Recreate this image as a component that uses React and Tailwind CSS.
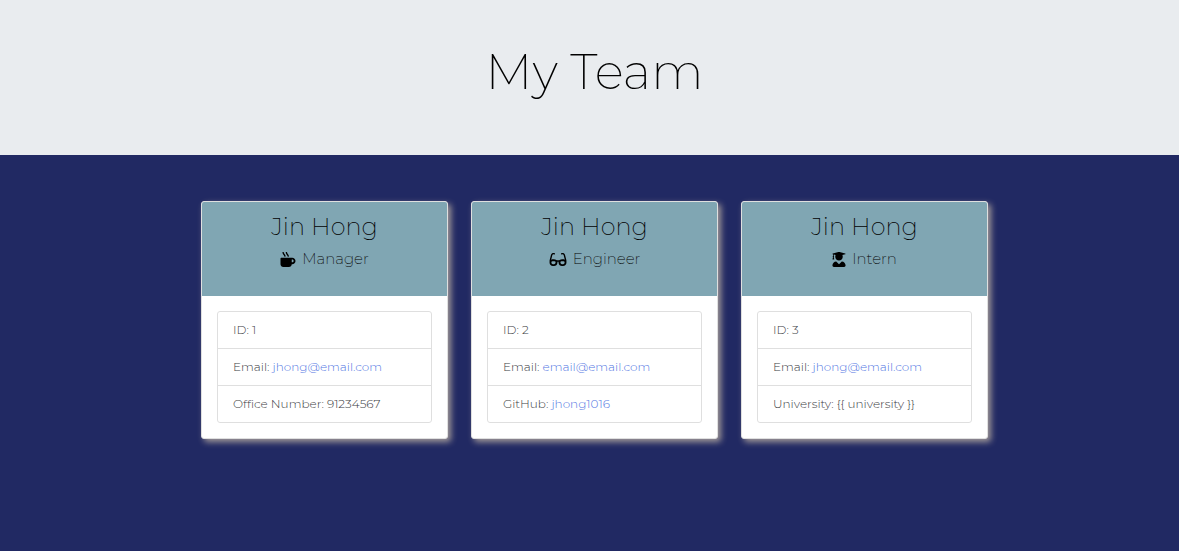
import { FaMugHot, FaGlasses, FaUserGraduate } from "react-icons/fa";

const team = [
  {
    name: "Jin Hong",
    role: "Manager",
    Icon: FaMugHot,
    iconWidth: "w-4",
    rows: [
      { label: "ID: ", value: "1" },
      { label: "Email: ", value: "jhong@email.com", href: "mailto:jhong@email.com" },
      { label: "Office Number: ", value: "91234567" },
    ],
  },
  {
    name: "Jin Hong",
    role: "Engineer",
    Icon: FaGlasses,
    iconWidth: "w-[18px]",
    rows: [
      { label: "ID: ", value: "2" },
      { label: "Email: ", value: "email@email.com", href: "mailto:email@email.com" },
      { label: "GitHub: ", value: "jhong1016", href: "https://github.com/jhong1016" },
    ],
  },
  {
    name: "Jin Hong",
    role: "Intern",
    Icon: FaUserGraduate,
    iconWidth: "w-[14px]",
    rows: [
      { label: "ID: ", value: "3" },
      { label: "Email: ", value: "jhong@email.com", href: "mailto:jhong@email.com" },
      { label: "University: ", value: "{{ university }}" },
    ],
  },
];

function Card({ name, role, Icon, iconWidth, rows }) {
  return (
    <article className="w-[247px] overflow-hidden rounded-[3px] border border-[#dfdfdf] bg-white shadow-[3px_3px_6px_#a39a98]">
      <header className="bg-[#80a6b3] pt-[11px] pb-[27px] text-center text-black">
        <h2 className="text-2xl leading-7 font-extralight">{name}</h2>
        <h3 className="mt-2 flex items-center justify-center gap-[6px] text-[15px] leading-5 font-extralight">
          <Icon className={`h-[15px] ${iconWidth}`} aria-hidden="true" />
          {role}
        </h3>
      </header>
      <div className="p-[15px]">
        <ul className="divide-y divide-[#dfdfdf] rounded-[3px] border border-[#dfdfdf]">
          {rows.map((row) => (
            <li key={row.label} className="px-[15px] py-2 text-xs leading-5 font-light text-[#3c4044]">
              {row.label}
              {row.href ? (
                <a href={row.href} className="text-[#5377e3]">
                  {row.value}
                </a>
              ) : (
                row.value
              )}
            </li>
          ))}
        </ul>
      </div>
    </article>
  );
}

export default function App() {
  return (
    <div className="min-h-screen bg-[#212963] font-[Montserrat,Inter,sans-serif]">
      <header className="bg-[#e9ecef] pt-10 pb-[51px] pl-[10px]">
        <h1 className="text-center text-[49px] leading-[64px] font-extralight text-black">My Team</h1>
      </header>
      <main className="flex flex-wrap justify-center gap-[23px] py-[46px] pl-[10px]">
        {team.map((member) => (
          <Card key={member.role} {...member} />
        ))}
      </main>
    </div>
  );
}
